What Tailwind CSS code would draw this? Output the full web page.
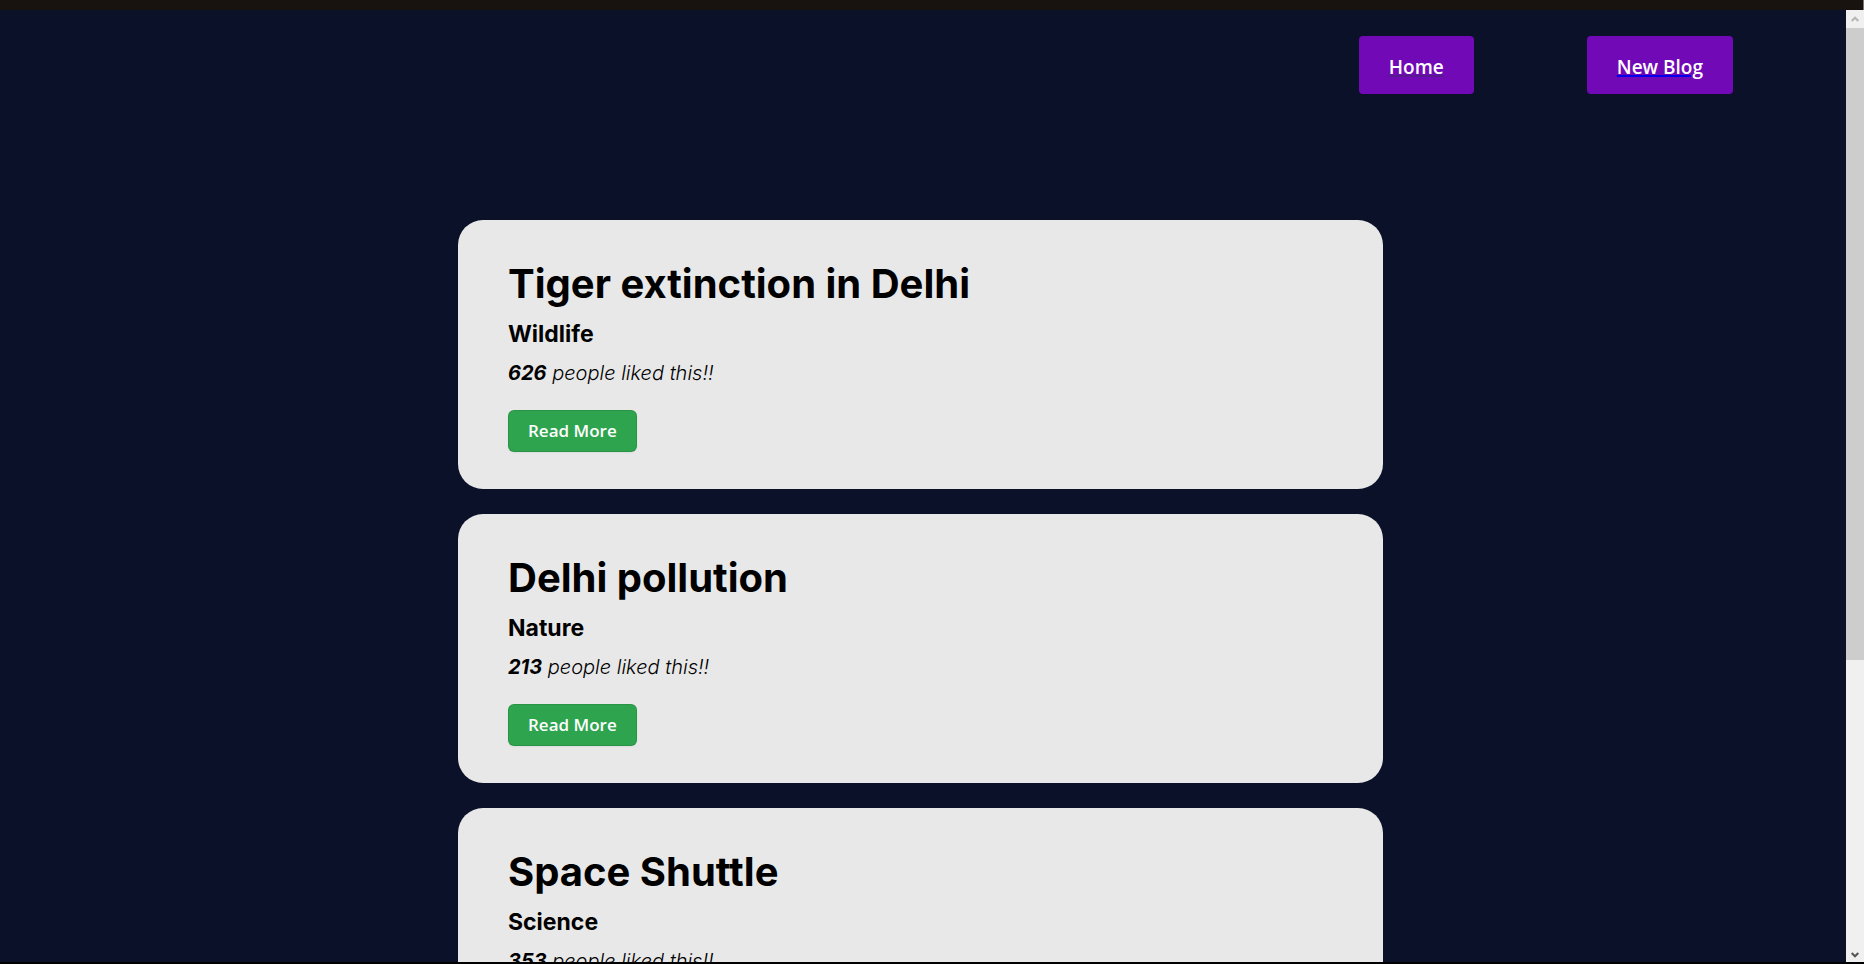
<!DOCTYPE html>
<html lang="en">
<head>
<meta charset="utf-8">
<meta name="viewport" content="width=device-width, initial-scale=1">
<title>Blogs</title>
<script src="https://cdn.jsdelivr.net/npm/@tailwindcss/browser@4"></script>
</head>
<body class="flex h-screen flex-col overflow-hidden bg-[#0a1128] font-['Inter',sans-serif] text-black">
  <div class="flex h-[10px] shrink-0 justify-end bg-[#18130f]"><div class="w-px bg-[#777777]"></div></div>
  <div class="flex min-h-0 flex-1 border-b-2 border-black">
    <div class="min-w-0 flex-1 overflow-hidden">
      <nav class="flex justify-end gap-[113px] pt-[26px] pr-[113px] font-['Open_Sans',sans-serif] text-[19px] leading-7 font-semibold">
        <a href="#home" class="rounded bg-[#7209b7] px-[30px] pt-[17px] pb-[13px] text-white underline decoration-[#551a8b] decoration-2 underline-offset-1">Home</a>
        <a href="#new" class="rounded bg-[#7209b7] px-[30px] pt-[17px] pb-[13px] text-white underline decoration-[#0000ee] decoration-2 underline-offset-1">New Blog</a>
      </nav>
      <main class="flex flex-col items-center gap-[25px] pt-[126px] pr-[5px]">
        <article class="w-full max-w-[925px] rounded-[25px] bg-[#e8e8e8] px-[50px] pt-[39px] pb-[37px]">
          <h2 class="text-[40px] leading-[50px] font-bold">Tiger extinction in Delhi</h2>
          <h3 class="mt-[11px] text-[23px] leading-7 font-bold">Wildlife</h3>
          <p class="mt-[13px] text-[20px] leading-6 font-light italic"><b class="font-bold">626</b> people liked this!!</p>
          <button type="button" class="mt-[25px] block h-[42px] rounded-md border border-black/10 bg-[#2ea44f] px-[19px] font-['Open_Sans',sans-serif] text-[17px] leading-6 font-semibold text-white shadow-xs">Read More</button>
        </article>
        <article class="w-full max-w-[925px] rounded-[25px] bg-[#e8e8e8] px-[50px] pt-[39px] pb-[37px]">
          <h2 class="text-[40px] leading-[50px] font-bold">Delhi pollution</h2>
          <h3 class="mt-[11px] text-[23px] leading-7 font-bold">Nature</h3>
          <p class="mt-[13px] text-[20px] leading-6 font-light italic"><b class="font-bold">213</b> people liked this!!</p>
          <button type="button" class="mt-[25px] block h-[42px] rounded-md border border-black/10 bg-[#2ea44f] px-[19px] font-['Open_Sans',sans-serif] text-[17px] leading-6 font-semibold text-white shadow-xs">Read More</button>
        </article>
        <article class="w-full max-w-[925px] rounded-[25px] bg-[#e8e8e8] px-[50px] pt-[39px] pb-[37px]">
          <h2 class="text-[40px] leading-[50px] font-bold">Space Shuttle</h2>
          <h3 class="mt-[11px] text-[23px] leading-7 font-bold">Science</h3>
          <p class="mt-[13px] text-[20px] leading-6 font-light italic"><b class="font-bold">353</b> people liked this!!</p>
          <button type="button" class="mt-[25px] block h-[42px] rounded-md border border-black/10 bg-[#2ea44f] px-[19px] font-['Open_Sans',sans-serif] text-[17px] leading-6 font-semibold text-white shadow-xs">Read More</button>
        </article>
      </main>
    </div>
    <div class="flex w-[18px] shrink-0 flex-col bg-[#f0f0f0]">
      <button type="button" aria-label="Scroll up" class="flex h-[18px] shrink-0 items-center justify-center"><svg width="8" height="6" viewBox="0 0 8 6" fill="none" stroke="#b5b5b5" stroke-width="2"><path d="M.7 5 4 1.7 7.3 5"/></svg></button>
      <div class="min-h-0 flex-1"><div class="h-[69%] bg-[#cdcdcd]"></div></div>
      <button type="button" aria-label="Scroll down" class="flex h-[18px] shrink-0 items-center justify-center pt-1"><svg width="8" height="6" viewBox="0 0 8 6" fill="none" stroke="#555555" stroke-width="2"><path d="M.7 1 4 4.3 7.3 1"/></svg></button>
    </div>
  </div>
</body>
</html>
